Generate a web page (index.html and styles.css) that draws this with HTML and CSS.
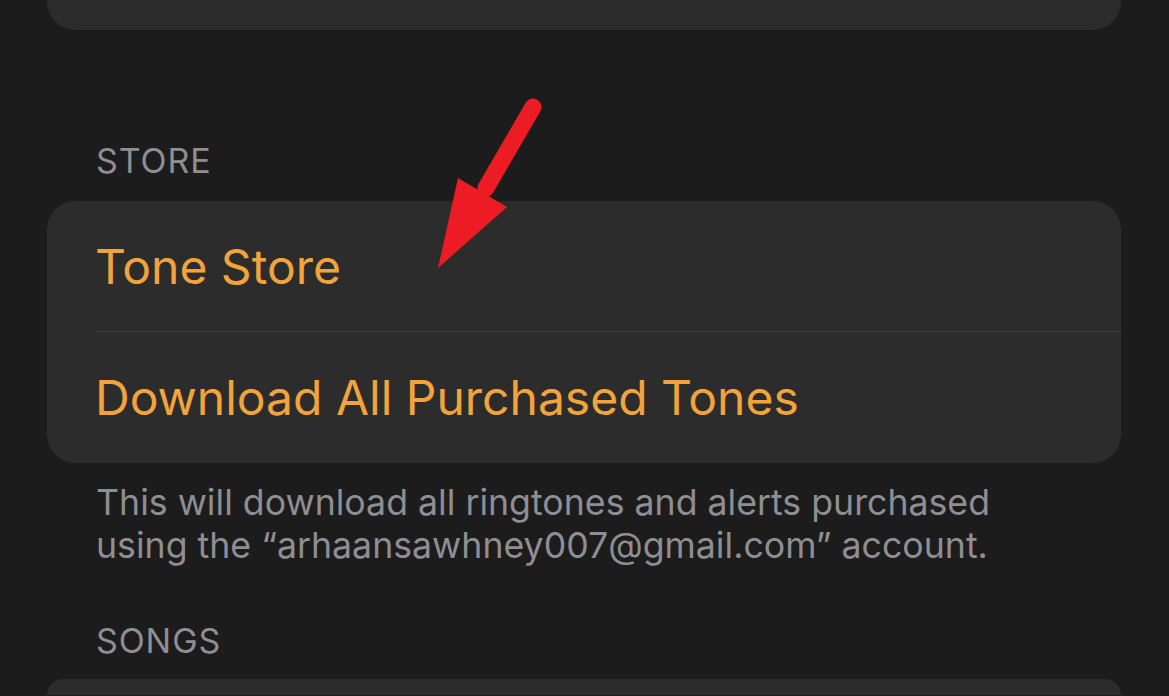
FILE: index.html
```html
<!DOCTYPE html>
<html>
<head>
<meta charset="utf-8">
<link rel="stylesheet" href="styles.css">
</head>
<body>
<div class="page">
  <div class="card card-top"></div>
  <div class="section-header header-store">STORE</div>
  <div class="card">
    <div class="row"><span class="row-label">Tone Store</span></div>
    <div class="row"><span class="row-label">Download All Purchased Tones</span></div>
  </div>
  <div class="footer-note">This will download all ringtones and alerts purchased<br>using the “arhaansawhney007@gmail.com” account.</div>
  <div class="section-header header-songs">SONGS</div>
  <div class="card card-bottom"></div>
  <svg class="arrow" width="1169" height="696" viewBox="0 0 1169 696">
    <line x1="533" y1="107" x2="486" y2="188" stroke="#ed1c24" stroke-width="17" stroke-linecap="round"/>
    <polygon points="458,178 507,207 438,268" fill="#ed1c24"/>
  </svg>
</div>
</body>
</html>
```
FILE: styles.css
```css
* { box-sizing: border-box; }
html, body {
  margin: 0;
  padding: 0;
  background: #1c1c1c;
  width: 1169px;
  height: 696px;
  overflow: hidden;
}
.page {
  position: relative;
  display: flow-root;
  width: 1169px;
  height: 696px;
  overflow: hidden;
  padding: 0 48px 0 47px;
  font-family: Inter, "Liberation Sans", sans-serif;
}
.card {
  background: #2c2c2c;
  border-radius: 28px;
  overflow: hidden;
}
.card-top {
  height: 80px;
  margin-top: -50px;
}
.section-header {
  color: #8e8e93;
  font-size: 34px;
  line-height: 40px;
  padding-left: 49px;
  letter-spacing: 0.9px;
}
.header-store {
  margin-top: 111px;
  margin-bottom: 20px;
}
.row {
  height: 131px;
  display: flex;
  align-items: center;
  margin-left: 48px;
  border-bottom: 1px solid #3d3d3f;
}
.row:last-child { border-bottom: none; }
.row-label {
  color: #f2a33a;
  font-size: 48px;
}
.footer-note {
  color: #8e8e93;
  font-size: 35.7px;
  line-height: 43px;
  padding-left: 49px;
  margin-top: 18px;
}
.header-songs {
  margin-top: 54px;
  margin-bottom: 18px;
}
.card-bottom {
  height: 16px;
  border-radius: 28px 28px 0 0;
}
.arrow {
  position: absolute;
  left: 0;
  top: 0;
  pointer-events: none;
}
```
